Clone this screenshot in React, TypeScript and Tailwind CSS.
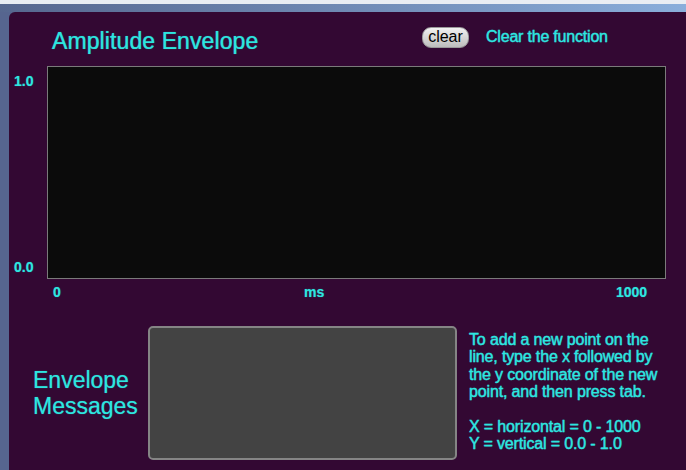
import React from 'react'

const helv = { fontFamily: '"Liberation Sans", Arial, Helvetica, sans-serif' }

const instructions = [
  'To add a new point on the',
  'line, type the x followed by',
  'the y coordinate of the new',
  'point, and then press tab.',
]

export default function App() {
  return (
    <div className="w-[686px] h-[470px] overflow-hidden bg-white flex flex-col" style={helv}>
      {/* window chrome strip */}
      <div className="h-[4px] bg-[#e9edf3]" />
      <div className="h-[8px] bg-gradient-to-r from-[#56678f] to-[#8aaedb]" />

      <div className="flex flex-1 bg-[#56658f]">
        <div className="w-[9px]" />
        <div className="flex-1 bg-[#330833] rounded-tl-[6px] flex flex-col text-[#2de6e0] [text-shadow:0_0_1px_rgba(45,230,224,0.6)]">
          {/* header */}
          <div className="flex items-center h-[54px]">
            <h1 className="ml-[43px] w-[370px] text-[23px] leading-none mt-[4px] tracking-[0.1px] [-webkit-text-stroke:0.2px_#2de6e0]">Amplitude Envelope</h1>
            <button className="mt-[-4px] h-[21px] w-[47px] rounded-[9px] bg-gradient-to-b from-[#f2f2f2] to-[#bdbdbd] border border-[#9a9a9a] text-black text-[16px] leading-none [text-shadow:none]">
              clear
            </button>
            <span className="ml-[17px] mt-[-4px] text-[16px] tracking-[-0.2px] [-webkit-text-stroke:0.3px_#2de6e0]">Clear the function</span>
          </div>

          {/* plot area */}
          <div className="flex">
            <div className="w-[38px] h-[213px] flex flex-col justify-between pl-[5px] text-[14px] font-bold">
              <span className="mt-[5px]">1.0</span>
              <span className="mb-[1px]">0.0</span>
            </div>
            <div className="w-[619px] h-[213px] bg-[#0b0b0b] border border-[#7a7a7a]" />
          </div>
          <div className="flex mt-[6px] text-[14px] font-bold leading-none">
            <span className="ml-[44px] w-[251px]">0</span>
            <span className="w-[312px]">ms</span>
            <span>1000</span>
          </div>

          {/* messages */}
          <div className="flex mt-[27px]">
            <div className="w-[139px] flex items-center pl-[24px] text-[23px] leading-[26px]">
              <span>Envelope<br />Messages</span>
            </div>
            <div className="w-[309px] h-[134px] bg-[#434343] border-2 border-[#858585] rounded-[5px]" />
            <div className="ml-[12px] mt-[5px] text-[16px] leading-[17.4px] tracking-[-0.15px] [-webkit-text-stroke:0.3px_#2de6e0]">
              {instructions.map(l => (
                <div key={l}>{l}</div>
              ))}
              <div className="h-[17.4px]" />
              <div>X = horizontal = 0 - 1000</div>
              <div>Y = vertical = 0.0 - 1.0</div>
            </div>
          </div>
        </div>
      </div>
    </div>
  )
}
